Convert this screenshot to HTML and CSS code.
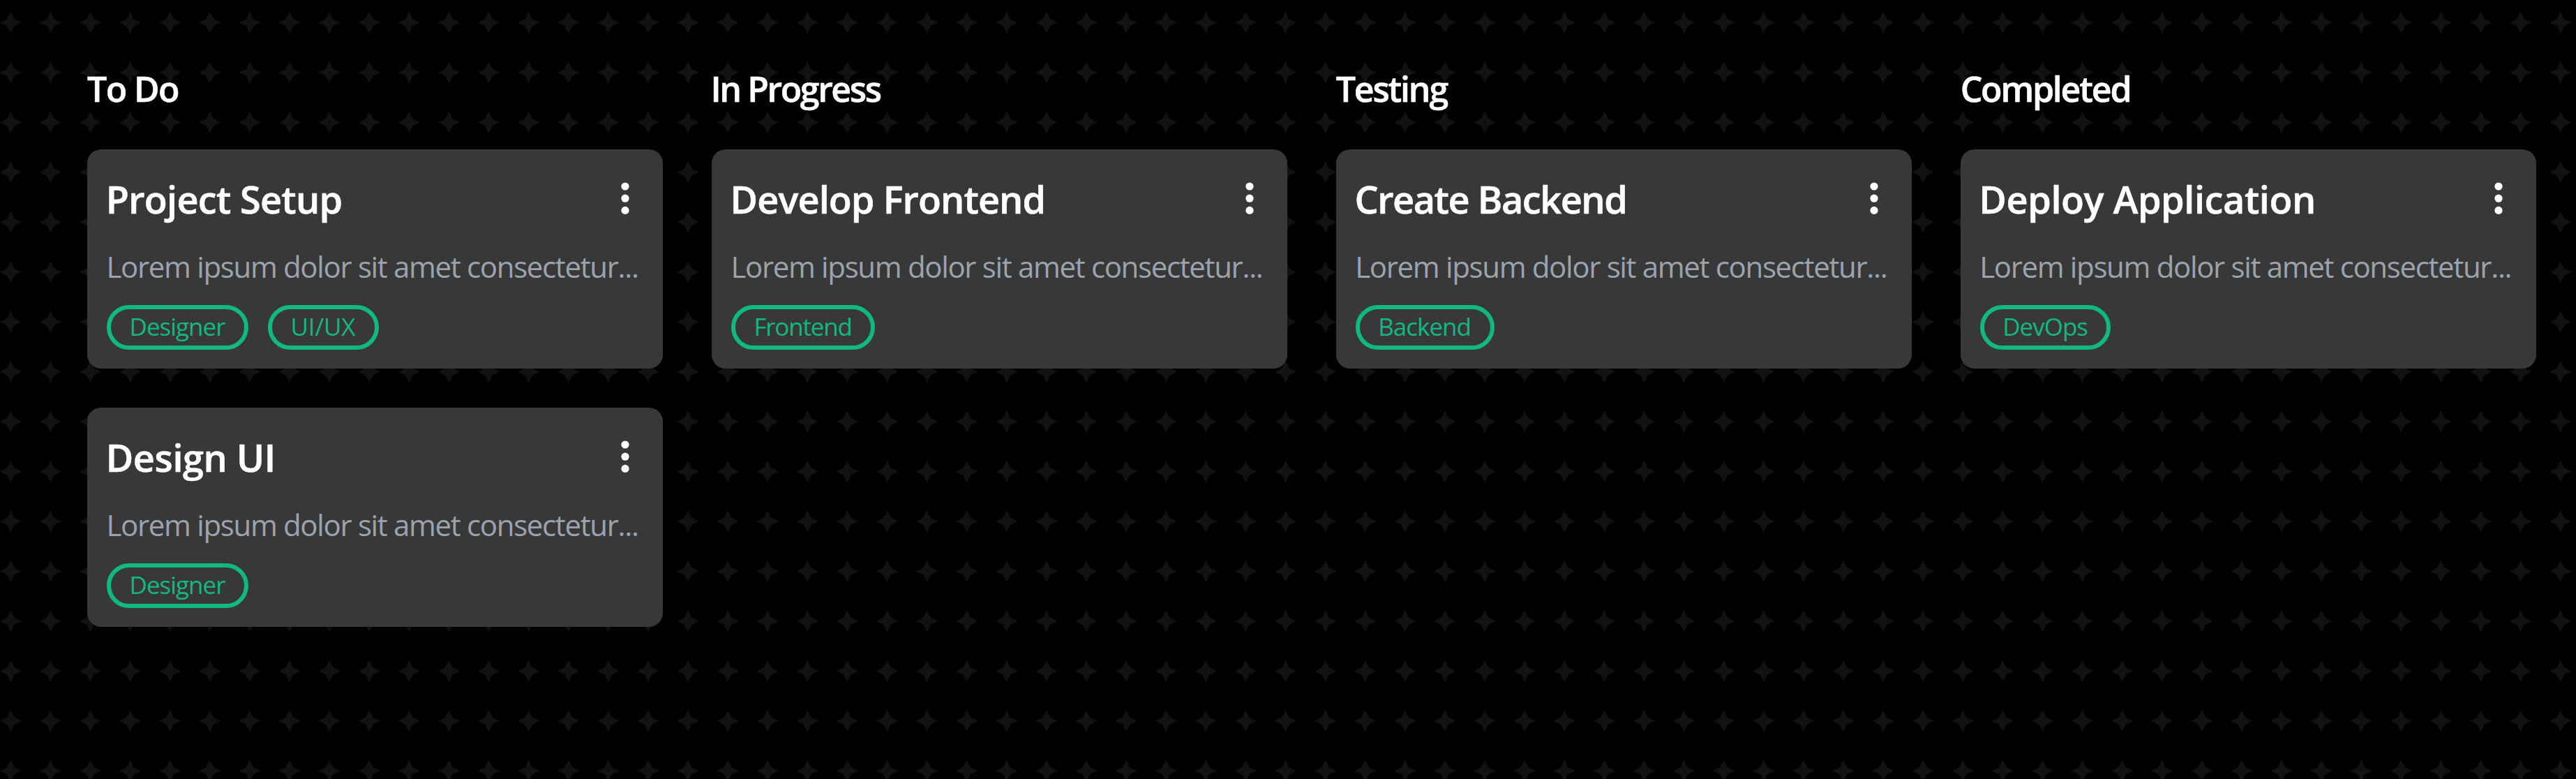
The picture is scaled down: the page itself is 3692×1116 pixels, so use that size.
FILE: index.html
```
<!DOCTYPE html>
<html lang="en">
<head>
<meta charset="utf-8">
<title>Task Board</title>
<link rel="stylesheet" href="styles.css">
</head>
<body>
<svg class="backdrop" aria-hidden="true">
  <defs>
    <pattern id="stars" width="57.1" height="71.47" patternUnits="userSpaceOnUse">
      <path fill="#121212" d="M15.3 16.7l5.2 10.4 10.4 5.2-10.4 5.2-5.2 10.4-5.2-10.4-10.4-5.2 10.4-5.2z"/>
    </pattern>
  </defs>
  <rect width="100%" height="100%" fill="url(#stars)"/>
</svg>
<main class="board">
  <section class="column todo">
    <h2 class="column-title">To Do</h2>
    <article class="card">
      <header class="card-head"><h3 class="card-title">Project Setup</h3><svg class="menu" viewBox="0 0 12 48"><circle cx="6" cy="7" r="5.6"/><circle cx="6" cy="24.2" r="5.6"/><circle cx="6" cy="41.4" r="5.6"/></svg></header>
      <p class="card-text">Lorem ipsum dolor sit amet consectetur...</p>
      <div class="tags"><span class="tag">Designer</span><span class="tag tag-wide">UI/UX</span></div>
    </article>
    <article class="card">
      <header class="card-head"><h3 class="card-title title-wide">Design UI</h3><svg class="menu" viewBox="0 0 12 48"><circle cx="6" cy="7" r="5.6"/><circle cx="6" cy="24.2" r="5.6"/><circle cx="6" cy="41.4" r="5.6"/></svg></header>
      <p class="card-text">Lorem ipsum dolor sit amet consectetur...</p>
      <div class="tags"><span class="tag">Designer</span></div>
    </article>
  </section>
  <section class="column progress">
    <h2 class="column-title">In Progress</h2>
    <article class="card">
      <header class="card-head"><h3 class="card-title">Develop Frontend</h3><svg class="menu" viewBox="0 0 12 48"><circle cx="6" cy="7" r="5.6"/><circle cx="6" cy="24.2" r="5.6"/><circle cx="6" cy="41.4" r="5.6"/></svg></header>
      <p class="card-text">Lorem ipsum dolor sit amet consectetur...</p>
      <div class="tags"><span class="tag">Frontend</span></div>
    </article>
  </section>
  <section class="column testing">
    <h2 class="column-title">Testing</h2>
    <article class="card">
      <header class="card-head"><h3 class="card-title">Create Backend</h3><svg class="menu" viewBox="0 0 12 48"><circle cx="6" cy="7" r="5.6"/><circle cx="6" cy="24.2" r="5.6"/><circle cx="6" cy="41.4" r="5.6"/></svg></header>
      <p class="card-text">Lorem ipsum dolor sit amet consectetur...</p>
      <div class="tags"><span class="tag">Backend</span></div>
    </article>
  </section>
  <section class="column completed">
    <h2 class="column-title">Completed</h2>
    <article class="card">
      <header class="card-head"><h3 class="card-title title-wide">Deploy Application</h3><svg class="menu" viewBox="0 0 12 48"><circle cx="6" cy="7" r="5.6"/><circle cx="6" cy="24.2" r="5.6"/><circle cx="6" cy="41.4" r="5.6"/></svg></header>
      <p class="card-text">Lorem ipsum dolor sit amet consectetur...</p>
      <div class="tags"><span class="tag">DevOps</span></div>
    </article>
  </section>
</main>
</body>
</html>
```
FILE: styles.css
```
* { box-sizing: border-box; margin: 0; }
body { background: #000; color: #fff; font-family: "Open Sans", "Noto Sans", sans-serif; overflow: hidden; height: 1116px; }
.backdrop { position: absolute; inset: 0; width: 100%; height: 100%; z-index: -1; }
.board { display: grid; grid-template-columns: repeat(4, minmax(0, 1fr)); gap: 69.5px; padding: 92px 57px 0 125px; }
.column { display: flex; flex-direction: column; }
.column-title { font-size: 50px; font-weight: 600; line-height: 70px; margin-bottom: 52px; letter-spacing: -2.2px; white-space: nowrap; -webkit-text-stroke: 0.6px; }
.card { height: 314px; border-radius: 20px; background: #383838; padding: 28px; margin-bottom: 56px; }
.card-head { display: flex; justify-content: space-between; height: 86px; }
.card-title { font-size: 54px; font-weight: 600; line-height: 86px; letter-spacing: -0.7px; margin-left: -1.3px; white-space: nowrap; -webkit-text-stroke: 0.6px; }
.menu { width: 12px; height: 48px; margin: 18px 20.5px 0 0; fill: #fff; }
.card-text { color: #9ca3af; font-size: 42px; line-height: 64px; margin: 22px 0 0 -0.5px; letter-spacing: -1.34px; white-space: nowrap; }
.tags { display: flex; gap: 28px; margin-top: 23px; }
.tag { height: 64px; border: 6px solid #10b981; border-radius: 32px; padding: 0 27.5px 0 26.5px; color: #10b981; font-size: 35px; line-height: 50px; letter-spacing: -1px; white-space: nowrap; }
.tag-wide { letter-spacing: -0.2px; }

/* Tracking adjustments per label */
.todo .column-title { letter-spacing: -1.6px; }
.progress .column-title { letter-spacing: -2.4px; margin-left: -1.5px; }
.progress .card-title { letter-spacing: -0.9px; }
.progress .tag { letter-spacing: -1.2px; }
.testing .card-title { letter-spacing: -1.45px; }
.card .title-wide { letter-spacing: -0.42px; }
```
